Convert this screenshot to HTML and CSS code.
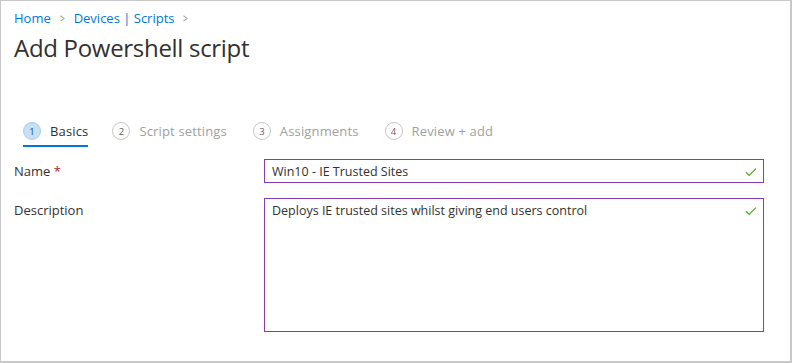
FILE: index.html
```html
<!DOCTYPE html>
<html>
<head>
<meta charset="utf-8">
<link rel="stylesheet" href="styles.css">
</head>
<body>
<div class="frame">
  <nav class="crumbs">
    <a class="crumb">Home</a>
    <span class="sep">&gt;</span>
    <a class="crumb">Devices | Scripts</a>
    <span class="sep">&gt;</span>
  </nav>
  <h1 class="title">Add Powershell script</h1>

  <div class="steps">
    <div class="step active"><span class="num">1</span><span class="label">Basics</span></div>
    <div class="step"><span class="num">2</span><span class="label">Script settings</span></div>
    <div class="step"><span class="num">3</span><span class="label">Assignments</span></div>
    <div class="step"><span class="num">4</span><span class="label">Review + add</span></div>
  </div>

  <div class="form">
    <div class="row">
      <div class="flabel">Name <span class="req">*</span></div>
      <div class="field input">
        <span class="value">Win10 - IE Trusted Sites</span>
        <svg class="check" width="12" height="10" viewBox="0 0 12 10"><path d="M1 5.2 L4.2 8.4 L11 1.6" fill="none" stroke="#5aa52a" stroke-width="1.3"/></svg>
      </div>
    </div>
    <div class="row">
      <div class="flabel">Description</div>
      <div class="field area">
        <span class="value">Deploys IE trusted sites whilst giving end users control</span>
        <svg class="check" width="12" height="10" viewBox="0 0 12 10"><path d="M1 5.2 L4.2 8.4 L11 1.6" fill="none" stroke="#5aa52a" stroke-width="1.3"/></svg>
      </div>
    </div>
  </div>
</div>
</body>
</html>
```
FILE: styles.css
```css
html, body {
  margin: 0;
  padding: 0;
  background: #fff;
}
body {
  font-family: "Open Sans", "Noto Sans", "Liberation Sans", sans-serif;
  color: #323130;
}
.frame {
  box-sizing: border-box;
  width: 792px;
  height: 363px;
  border: 1px solid #c8c8c8;
  border-right-width: 2px;
  border-bottom-width: 2px;
  padding: 7px 0 0 13px;
}
.crumbs {
  display: flex;
  align-items: center;
  gap: 8px;
  font-size: 13px;
  height: 20px;
}
.crumb {
  color: #0078d4;
}
.sep {
  color: #8a8886;
  font-size: 12px;
  transform: scaleX(0.7);
}
.title {
  margin: 5px 0 0 0;
  font-size: 24px;
  font-weight: 400;
  color: #323130;
  letter-spacing: -0.3px;
  line-height: 30px;
}
.steps {
  display: flex;
  margin-top: 54px;
  margin-left: 9px;
  margin-bottom: 12px;
}
.step {
  display: flex;
  align-items: center;
  gap: 9px;
  height: 28px;
  margin-right: 26px;
  font-size: 13px;
  letter-spacing: 0.15px;
  color: #a19f9d;
  border-bottom: 2px solid transparent;
}
.step.active {
  color: #323130;
  border-bottom-color: #0078d4;
  margin-right: 24px;
}
.num {
  box-sizing: border-box;
  width: 18px;
  height: 18px;
  border-radius: 50%;
  border: 1px solid #c8c6c4;
  font-size: 9.5px;
  letter-spacing: 0;
  display: flex;
  align-items: center;
  justify-content: center;
  color: #605e5c;
}
.step.active .num {
  background: #c7e0f4;
  border-color: #a6cdee;
  color: #0b4f8a;
}
.form {
  display: flex;
  flex-direction: column;
  gap: 15px;
}
.row {
  display: flex;
}
.flabel {
  width: 250px;
  font-size: 13px;
  padding-top: 3px;
  color: #323130;
}
.req {
  color: #a4262c;
}
.field {
  box-sizing: border-box;
  width: 500px;
  border: 1px solid #8a3ca8;
  display: flex;
  justify-content: space-between;
  align-items: flex-start;
  padding: 3px 6px 0 7px;
  font-size: 12.5px;
}
.input {
  height: 24px;
}
.area {
  height: 134px;
}
.check {
  margin-top: 4px;
}
```
